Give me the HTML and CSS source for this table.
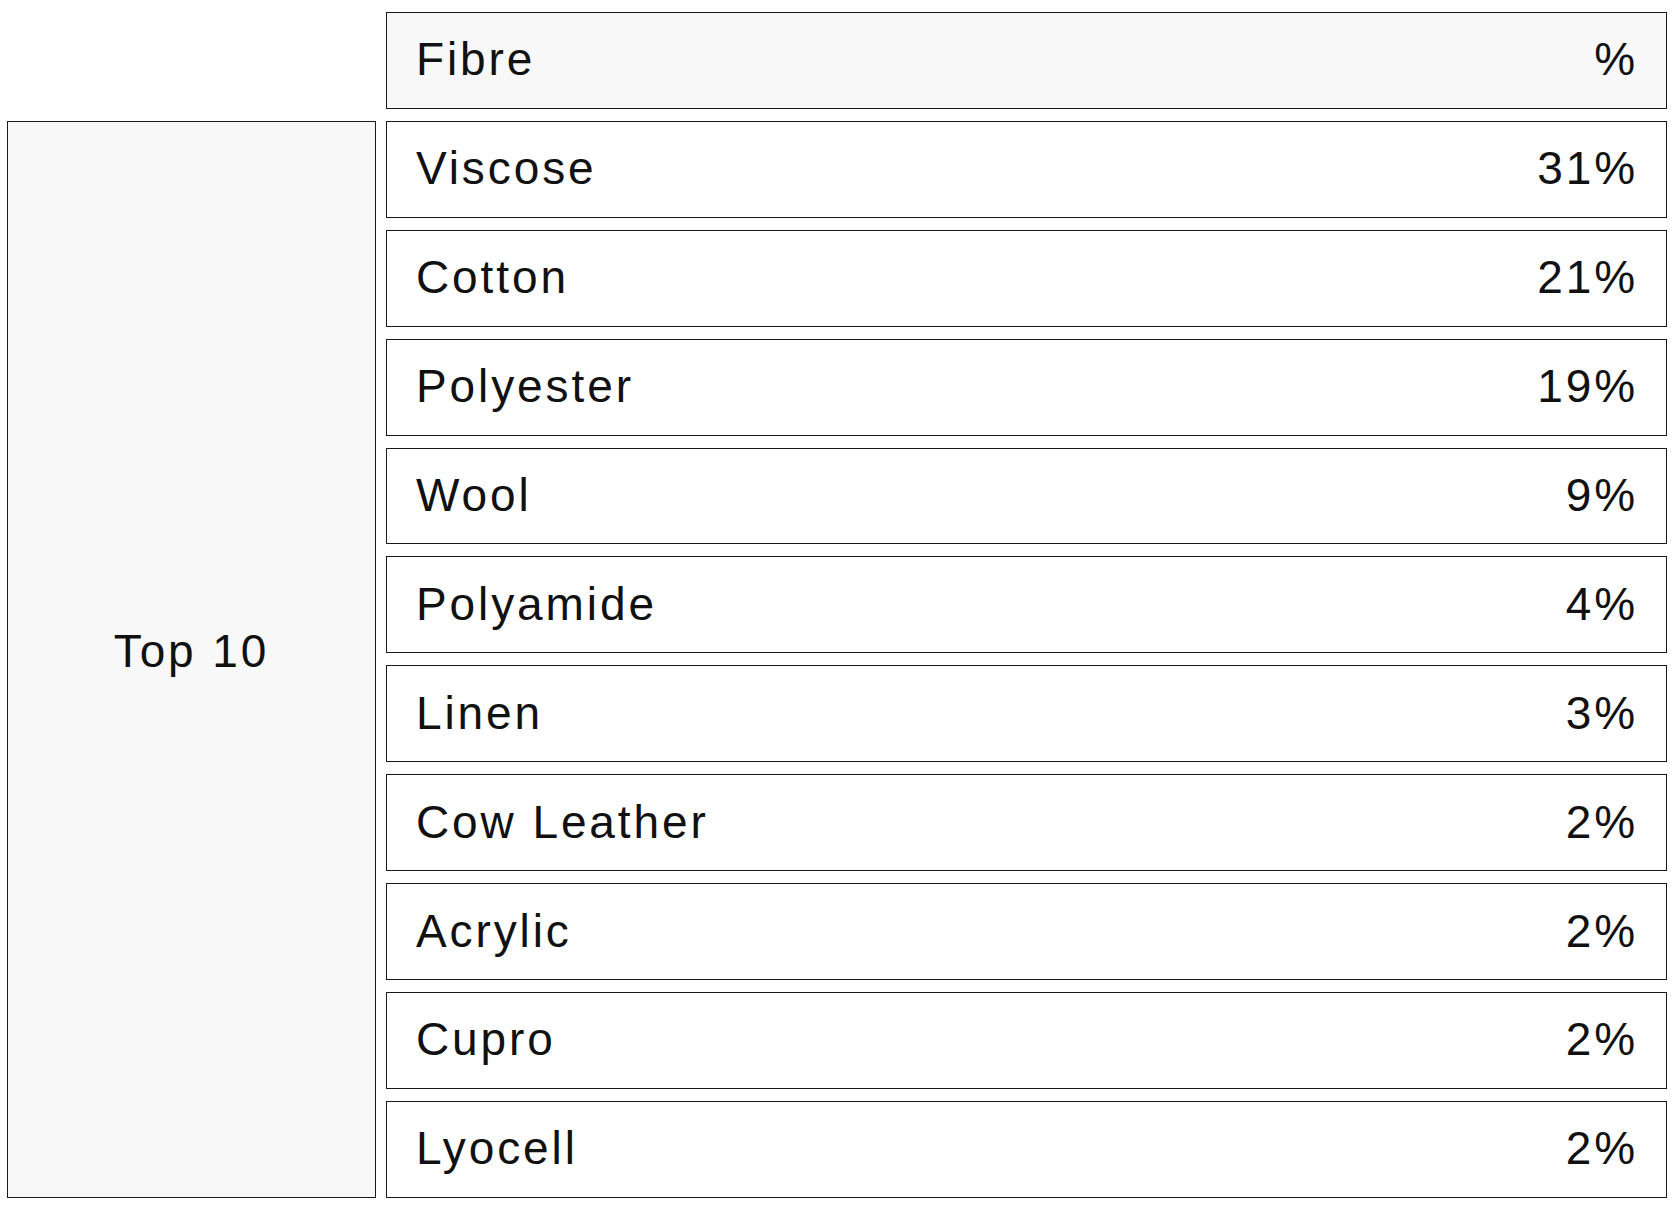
FILE: index.html
```html
<!DOCTYPE html>
<html lang="en">
<head>
<meta charset="utf-8">
<title>Top 10 Fibres</title>
<link rel="stylesheet" href="styles.css">
</head>
<body>
  <div class="table">
    <div class="blank"></div>
    <div class="cell head"><span>Fibre</span><span>%</span></div>
    <div class="group">Top 10</div>
    <div class="cell"><span>Viscose</span><span>31%</span></div>
    <div class="cell"><span>Cotton</span><span>21%</span></div>
    <div class="cell"><span>Polyester</span><span>19%</span></div>
    <div class="cell"><span>Wool</span><span>9%</span></div>
    <div class="cell"><span>Polyamide</span><span>4%</span></div>
    <div class="cell"><span>Linen</span><span>3%</span></div>
    <div class="cell"><span>Cow Leather</span><span>2%</span></div>
    <div class="cell"><span>Acrylic</span><span>2%</span></div>
    <div class="cell"><span>Cupro</span><span>2%</span></div>
    <div class="cell"><span>Lyocell</span><span>2%</span></div>
  </div>
</body>
</html>
```
FILE: styles.css
```css
html, body {
  margin: 0;
  padding: 0;
  background: #ffffff;
}
body {
  padding: 12px 11px 0 7px;
  font-family: "Liberation Sans", Arial, Helvetica, sans-serif;
  color: #111;
}
.table {
  display: grid;
  grid-template-columns: 369px 1fr;
  grid-auto-rows: 96.9px;
  column-gap: 10px;
  row-gap: 12px;
}
.blank {
  grid-column: 1;
}
.cell {
  box-sizing: border-box;
  border: 1px solid #1a1a1a;
  background: #ffffff;
  display: flex;
  align-items: center;
  justify-content: space-between;
  padding: 0 28px 2px 29px;
  font-size: 46px;
  letter-spacing: 2.9px;
  line-height: 1;
}
.cell.head {
  background: #f8f8f8;
}
.group {
  grid-column: 1;
  grid-row: 2 / span 10;
  box-sizing: border-box;
  border: 1px solid #1a1a1a;
  background: #f8f8f8;
  display: flex;
  align-items: center;
  justify-content: center;
  padding-bottom: 17px;
  font-size: 46px;
  letter-spacing: 2.9px;
  line-height: 1;
}
```
